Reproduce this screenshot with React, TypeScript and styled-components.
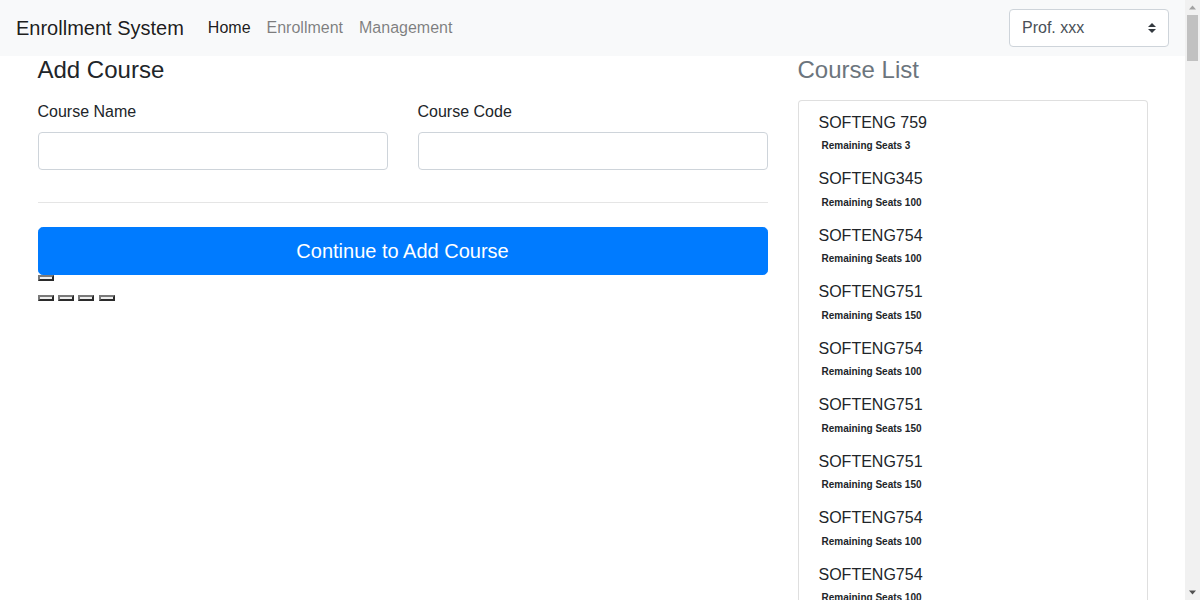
import React from "react";
import styled, { createGlobalStyle } from "styled-components";

const GlobalStyle = createGlobalStyle`
  html, body {
    margin: 0;
    padding: 0;
  }
  body {
    font-family: "Liberation Sans", Arial, "Helvetica Neue", sans-serif;
    font-size: 16px;
    line-height: 1.5;
    color: #212529;
    background: #fff;
  }
  *, *::before, *::after { box-sizing: border-box; }
`;

const Page = styled.div`
  margin-right: 15px;
`;

/* drawing of the browser's vertical scrollbar, which lies over the page edge */
const ScrollTrack = styled.div`
  position: fixed;
  top: 0;
  right: 0;
  width: 15px;
  height: 100vh;
  background: #f1f1f1;
  display: flex;
  flex-direction: column;
  align-items: center;
  z-index: 10;
`;

const ScrollArrow = styled.svg`
  display: block;
  width: 15px;
  height: 15px;
  flex: 0 0 15px;
`;

const ScrollThumb = styled.div`
  width: 11px;
  height: 46px;
  background: #c1c1c1;
`;

const ScrollSpacer = styled.div`
  flex: 1;
`;

const Navbar = styled.nav`
  display: flex;
  align-items: center;
  justify-content: space-between;
  padding: 8px 16px;
  background: #f8f9fa;
`;

const NavLeft = styled.div`
  display: flex;
  align-items: center;
`;

const Brand = styled.a`
  font-size: 20px;
  line-height: 30px;
  padding: 5px 0;
  margin-right: 16px;
  color: rgba(0, 0, 0, 0.9);
  text-decoration: none;
  white-space: nowrap;
`;

const NavList = styled.div`
  display: flex;
`;

const NavLink = styled.a<{ $active?: boolean }>`
  padding: 8px;
  line-height: 24px;
  color: ${(p) => (p.$active ? "rgba(0, 0, 0, 0.9)" : "rgba(0, 0, 0, 0.5)")};
  text-decoration: none;
`;

const SelectWrap = styled.div`
  position: relative;
  width: 160px;
`;

const Select = styled.select`
  appearance: none;
  -webkit-appearance: none;
  display: block;
  width: 100%;
  height: 38px;
  padding: 6px 28px 6px 12px;
  font-family: inherit;
  font-size: 16px;
  line-height: 24px;
  color: #495057;
  background: #fff;
  border: 1px solid #ced4da;
  border-radius: 4px;
  outline: none;
`;

const SelectCaret = styled.svg`
  position: absolute;
  right: 13px;
  top: 14px;
  width: 8px;
  height: 10px;
  pointer-events: none;
`;

const Container = styled.main`
  max-width: 1140px;
  margin: 0 auto;
  padding: 0 15px;
`;

const Columns = styled.div`
  display: grid;
  grid-template-columns: minmax(0, 73fr) minmax(0, 35fr);
  column-gap: 30px;
  align-items: start;
`;

const Column = styled.section`
  display: flex;
  flex-direction: column;
  align-items: stretch;
`;

const Heading = styled.h4<{ $muted?: boolean }>`
  margin: 0 0 15px;
  font-size: 24px;
  font-weight: 500;
  line-height: 1.2;
  color: ${(p) => (p.$muted ? "#6c757d" : "#212529")};
`;

const FormRow = styled.div`
  display: grid;
  grid-template-columns: 1fr 1fr;
  column-gap: 30px;
`;

const FormGroup = styled.div`
  margin-bottom: 16px;
`;

const Label = styled.label`
  display: block;
  margin-bottom: 8px;
  line-height: 24px;
`;

const Input = styled.input`
  display: block;
  width: 100%;
  height: 38px;
  padding: 6px 12px;
  font-family: inherit;
  font-size: 16px;
  color: #495057;
  background: #fff;
  border: 1px solid #ced4da;
  border-radius: 4px;
  outline: none;
`;

const Divider = styled.hr`
  margin: 16px 0 24px;
  border: 0;
  border-top: 1px solid rgba(0, 0, 0, 0.1);
  height: 0;
`;

const PrimaryButton = styled.button`
  display: block;
  width: 100%;
  padding: 8px 16px;
  font-family: inherit;
  font-size: 20px;
  line-height: 30px;
  color: #fff;
  background: #007bff;
  border: 1px solid #007bff;
  border-radius: 4.8px;
  text-align: center;
  cursor: pointer;
`;

const Extras = styled.div`
  display: flex;
  flex-direction: column;
  align-items: flex-start;
  gap: 14px;
`;

const ExtrasRow = styled.div`
  display: flex;
  gap: 4.45px;
`;

const TinyButton = styled.button`
  display: block;
  width: 16px;
  height: 6px;
  padding: 0;
  background: #efefef;
  border-width: 2px;
  border-style: solid;
  border-color: #7a7a7a #2b2b2b #2b2b2b #7a7a7a;
`;

const Card = styled.div`
  border: 1px solid rgba(0, 0, 0, 0.125);
  border-radius: 4px;
  background: #fff;
`;

const Item = styled.div`
  padding: 12px 20px 1.3px;
`;

const ItemName = styled.div`
  font-size: 16px;
  line-height: 19.2px;
  color: #212529;
`;

const SeatsLine = styled.div`
  font-size: 16px;
  line-height: 1.5;
  height: 24px;
  padding-left: 3px;
`;

const Seats = styled.small`
  font-size: 10px;
  font-weight: 700;
  color: #212529;
`;

type Course = { name: string; seats: number };

const firstCourses: Course[] = [
  { name: "SOFTENG 759", seats: 3 },
  { name: "SOFTENG345", seats: 100 },
  { name: "SOFTENG754", seats: 100 },
  { name: "SOFTENG751", seats: 150 },
  { name: "SOFTENG754", seats: 100 },
  { name: "SOFTENG751", seats: 150 },
  { name: "SOFTENG751", seats: 150 },
  { name: "SOFTENG754", seats: 100 },
  { name: "SOFTENG754", seats: 100 },
];

const cycle: Course[] = [
  { name: "SOFTENG751", seats: 150 },
  { name: "SOFTENG754", seats: 100 },
  { name: "SOFTENG754", seats: 100 },
  { name: "SOFTENG751", seats: 150 },
  { name: "SOFTENG345", seats: 100 },
];

const courses: Course[] = [...firstCourses];
for (let i = 0; courses.length < 130; i++) {
  courses.push(cycle[i % cycle.length]);
}

export default function App() {
  return (
    <>
      <GlobalStyle />
      <Page>
        <Navbar>
          <NavLeft>
            <Brand href="#">Enrollment System</Brand>
            <NavList>
              <NavLink href="#" $active>
                Home
              </NavLink>
              <NavLink href="#">Enrollment</NavLink>
              <NavLink href="#">Management</NavLink>
            </NavList>
          </NavLeft>
          <SelectWrap>
            <Select defaultValue="xxx">
              <option value="xxx">Prof. xxx</option>
            </Select>
            <SelectCaret viewBox="0 0 4 5">
              <path fill="#343a40" d="M2 0L0 2h4zm0 5L0 3h4z" />
            </SelectCaret>
          </SelectWrap>
        </Navbar>
        <Container>
          <Columns>
            <Column>
              <Heading>Add Course</Heading>
              <FormRow>
                <FormGroup>
                  <Label htmlFor="courseName">Course Name</Label>
                  <Input id="courseName" type="text" />
                </FormGroup>
                <FormGroup>
                  <Label htmlFor="courseCode">Course Code</Label>
                  <Input id="courseCode" type="text" />
                </FormGroup>
              </FormRow>
              <Divider />
              <PrimaryButton type="button">Continue to Add Course</PrimaryButton>
              <Extras>
                <TinyButton type="button" />
                <ExtrasRow>
                  <TinyButton type="button" />
                  <TinyButton type="button" />
                  <TinyButton type="button" />
                  <TinyButton type="button" />
                </ExtrasRow>
              </Extras>
            </Column>
            <Column>
              <Heading $muted>Course List</Heading>
              <Card>
                {courses.map((c, i) => (
                  <Item key={i}>
                    <ItemName>{c.name}</ItemName>
                    <SeatsLine>
                      <Seats>Remaining Seats {c.seats}</Seats>
                    </SeatsLine>
                  </Item>
                ))}
              </Card>
            </Column>
          </Columns>
        </Container>
      </Page>
      <ScrollTrack aria-hidden="true">
        <ScrollArrow viewBox="0 0 15 15">
          <path fill="#a3a3a3" d="M4 9.5h7L7.5 5.5z" />
        </ScrollArrow>
        <ScrollThumb />
        <ScrollSpacer />
        <ScrollArrow viewBox="0 0 15 15">
          <path fill="#505050" d="M4 5.5h7L7.5 9.5z" />
        </ScrollArrow>
      </ScrollTrack>
    </>
  );
}
